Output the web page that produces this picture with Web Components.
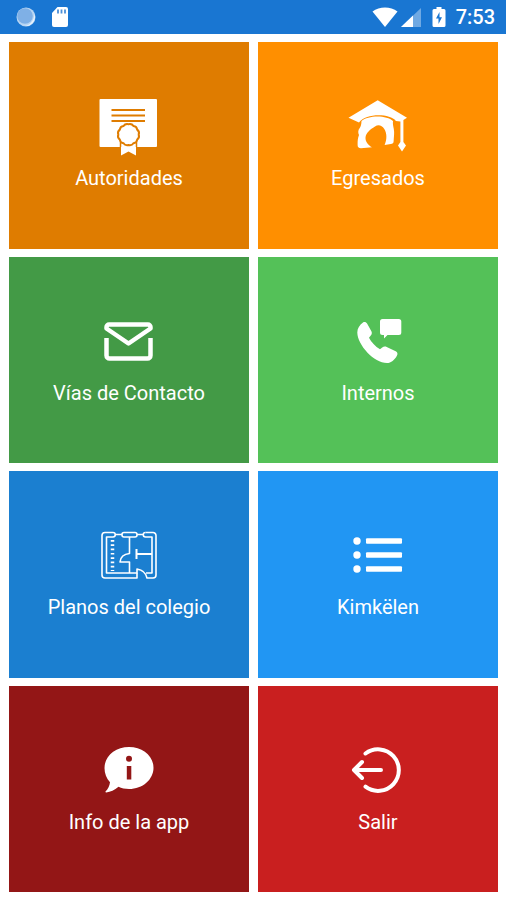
<!DOCTYPE html>
<html lang="es">
<head>
<meta charset="utf-8">
<meta name="viewport" content="width=device-width, initial-scale=1">
<title>Colegio</title>
<style>
    body {
        margin: 0;
        background: #fff;
        font-family: Roboto, "Liberation Sans", sans-serif;
    }
</style>
</head>
<body>

<app-screen>
    <status-bar slot="status" time="7:53"></status-bar>
    <menu-tile color="#df7c00" icon="diploma">Autoridades</menu-tile>
    <menu-tile color="#ff8f00" icon="graduate">Egresados</menu-tile>
    <menu-tile color="#439a46" icon="mail">Vías de Contacto</menu-tile>
    <menu-tile color="#54c158" icon="phone">Internos</menu-tile>
    <menu-tile color="#1b7fd0" icon="plan">Planos del colegio</menu-tile>
    <menu-tile color="#2196f3" icon="list">Kimkëlen</menu-tile>
    <menu-tile color="#931616" icon="info">Info de la app</menu-tile>
    <menu-tile color="#c91f1f" icon="exit">Salir</menu-tile>
</app-screen>

<script>
// All icons share a 64x64 box and take their colour from the tile
const icons = {
    diploma: `
        <rect x="2.500" y="3" width="57.500" height="48" rx="1" fill="currentColor"/>
        <path d="M14.500 14H48M14.500 19.500H48M14.500 25H48" stroke="var(--tile)" stroke-width="2"/>
        <path d="M24 46h15v13.500l-7.500-4-7.500 4z" fill="currentColor"/>
        <path d="M23.500 46v5M39.500 46v5" stroke="var(--tile)" stroke-width="1.500"/>
        <path d="M31.500 28.200q3.300-.8 5 1.800q3.200.4 3.700 3.600q2.600 2 1.500 5q1.100 3-1.500 5q-.5 3.200-3.700 3.600q-1.700 2.600-5 1.800q-3.300.8-5-1.800q-3.200-.4-3.700-3.600q-2.600-2-1.500-5q-1.100-3 1.500-5q.5-3.200 3.700-3.600q1.700-2.600 5-1.800z" fill="currentColor" stroke="var(--tile)" stroke-width="2"/>`,
    graduate: `
        <path d="M31.700 4.200L61 21.700l-3.600 2.200v22l2.600 3.600-4 6-4-6 2.400-3.600V25.500l-4.500-.5C44 17.500 20 17 13 26.500L2.500 21.700z" fill="currentColor"/>
        <path d="M15.500 25C22 19 41 19 47 25c-.4 3 .3 5 .8 8 .8 4 0 8-.2 12.500 0 1.500-1 2.500-2.800 2.500l-6.200 1c2.300-5 2.600-11.500-.3-16-2.500-3.800-6-4.700-9.300-2.500C24 33.500 20 37 19.500 41.500c-.2 4 2.500 7.500 6.500 9.800L15 52.300c-2.400 0-3.600-1.300-3.400-3.800 0-4 .2-6.500 1.400-9.500-1.200-2.500-.8-5 .4-6.500 1.500-2 2-4.500 2.100-7.500z" fill="currentColor"/>`,
    mail: `
        <path d="M9.500 17.500V16a2.500 2.500 0 0 1 2.500-2.500h39A2.500 2.500 0 0 1 53.500 16v1.500l-22 15z" fill="none" stroke="currentColor" stroke-width="4.500" stroke-linejoin="round"/>
        <path d="M9.500 27v17.500a3 3 0 0 0 3 3h38a3 3 0 0 0 3-3V27" fill="none" stroke="currentColor" stroke-width="4.500"/>`,
    phone: `
        <g transform="translate(0 -4)" fill="currentColor">
            <path d="M17 15.500c1.500-.8 3.200-.4 4.200 1.200l4.200 7.500c.8 1.500.5 3.200-.8 4.500L23 30.700c2.200 4.300 6.300 8.800 11 11.500l2.200-1.700c1.300-1 3-1.200 4.500-.5l9 4.200c1.700.8 2.300 2.600 1.300 4.200-2.300 4.600-6 7.400-10 7.600C28 56 11.500 38 11.300 25.500c0-4 2.200-7.500 5.700-10z"/>
            <path d="M36.500 12h16.300a2.500 2.500 0 0 1 2.500 2.500v11a2.500 2.500 0 0 1-2.500 2.500H41.500L38 31.500V28h-1.500a2.500 2.500 0 0 1-2.500-2.500v-11a2.500 2.500 0 0 1 2.500-2.500z"/>
        </g>`,
    plan: `
        <g transform="translate(0 -4)" fill="none" stroke="currentColor" stroke-width="1.600" stroke-linejoin="round">
            <path d="M16 11.500H8a3 3 0 0 0-3 3V54a3 3 0 0 0 3 3h32v-5"/>
            <path d="M48.500 11.500H56a3 3 0 0 1 3 3V54a3 3 0 0 1-3 3h-6c-1-5-4.500-8-10-9v4H9.500V16H16a2.200 2.200 0 0 0 0-4.500"/>
            <rect x="25" y="11.500" width="15" height="4.500" rx="2"/>
            <path d="M18 13.500h7M40 13.500h7M48.500 11.500a2.200 2.200 0 0 0 0 4.500H55v36h-6"/>
            <path d="M32.500 16v16.500c-5.500.5-9 4-9.500 8.500h9.500v11"/>
            <path d="M39.500 28v10M39.500 33H55" stroke-width="2"/>
            <path d="M15.500 19v31" stroke-width="3.500" stroke-dasharray="1.700 2.600"/>
        </g>`,
    list: `
        <g fill="currentColor">
            <circle cx="11" cy="16" r="3.700"/><circle cx="11" cy="30" r="3.700"/><circle cx="11" cy="44" r="3.700"/>
            <rect x="20" y="13.200" width="36" height="5.600" rx="1"/>
            <rect x="20" y="27.200" width="36" height="5.600" rx="1"/>
            <rect x="20" y="41.200" width="36" height="5.600" rx="1"/>
        </g>`,
    info: `
        <g transform="translate(0 -4)">
            <path d="M32 11c13.700 0 24.500 9 24.500 20.700S45.700 53 32 53c-4 0-7.500-.8-10.500-2.200-4 3.500-8 5.200-12.300 5.700-.8 0-1-.8-.5-1.300 2.200-2.300 4-5.400 4.300-9C9.500 42.500 7.500 37.500 7.500 32 7.500 20 18.300 11 32 11z" fill="currentColor"/>
            <circle cx="32" cy="22.800" r="3" fill="var(--tile)"/>
            <rect x="29.800" y="30" width="4.500" height="13.500" fill="var(--tile)"/>
        </g>`,
    exit: `
        <g fill="none" stroke="currentColor" stroke-width="4" stroke-linecap="round" stroke-linejoin="round">
            <path d="M19.500 13.500a20.800 20.800 0 1 1 0 33.200"/>
            <path d="M35 30H9M16 22l-8 8 8 8"/>
        </g>`
};

const screenTemplate = document.createElement('template');
screenTemplate.innerHTML = `
<style>
    :host {
        display: flex;
        flex-direction: column;
        min-height: 100vh;
    }

    main {
        flex: 1;
        display: grid;
        grid-template-columns: 1fr 1fr;
        grid-auto-rows: 1fr;
        gap: 8px 9px;
        padding: 8px 8px 8px 9px;
    }
</style>

<slot name="status"></slot>
<main><slot></slot></main>
`;

class AppScreen extends HTMLElement {
    constructor() {
        super();
        this.root = this.attachShadow({ mode: 'open' });
        this.root.appendChild(screenTemplate.content.cloneNode(true));
    }
}

const statusTemplate = document.createElement('template');
statusTemplate.innerHTML = `
<style>
    :host {
        display: block;
        background: #1976d2;
        color: #fff;
    }

    header {
        display: flex;
        align-items: center;
        justify-content: space-between;
        height: 34px;
        padding: 0 11px 0 15px;
    }

    .group {
        display: flex;
        align-items: center;
    }

    .left {
        gap: 14px;
    }

    .wifi {
        margin-right: 3px;
    }

    .signal {
        margin-right: 11px;
    }

    .battery {
        margin-right: 10px;
    }

    svg {
        display: block;
    }

    time {
        font-size: 20px;
        font-weight: 500;
        line-height: 24px;
    }
</style>

<header>
    <div class="group left">
        <svg width="22" height="22" viewBox="0 0 22 22" aria-hidden="true">
            <circle cx="11" cy="11" r="9.500" fill="#b9d6f3"/>
            <circle cx="10" cy="10" r="7.800" fill="#7fb0e6"/>
            <path d="M19.500 8a9.200 9.200 0 0 1-10 12c5-.3 9.500-5 10-12z" fill="#e8f3fd"/>
        </svg>
        <svg width="18" height="22" viewBox="0 0 18 22" aria-hidden="true">
            <path d="M6.500 1h8.500a2 2 0 0 1 2 2v16a2 2 0 0 1-2 2H3a2 2 0 0 1-2-2V7z" fill="#fff"/>
            <path d="M7 3.500v4M10.500 3.500v4M14 3.500v4" stroke="#4c8fd8" stroke-width="1.800"/>
        </svg>
    </div>
    <div class="group">
        <svg class="wifi" width="26" height="22" viewBox="0 0 26 22" aria-hidden="true">
            <path d="M.5 5.500C7.500.2 18.500.2 25.500 5.500L13 21z" fill="#fff"/>
        </svg>
        <svg class="signal" width="20" height="20" viewBox="0 0 20 20" aria-hidden="true">
            <path d="M0 20L20 1v19z" fill="#6fa9e3"/>
            <path d="M0 20L12 8.500V20z" fill="#fff"/>
        </svg>
        <svg class="battery" width="14" height="22" viewBox="0 0 14 22" aria-hidden="true">
            <path d="M4.500 1h5v2H12a1.500 1.500 0 0 1 1.500 1.500v15A1.500 1.500 0 0 1 12 21H2a1.500 1.500 0 0 1-1.500-1.500v-15A1.500 1.500 0 0 1 2 3h2.500z" fill="#fff"/>
            <path d="M7.500 6L4 12.500h2.500V18L10 11.200H7.500z" fill="#1976d2"/>
        </svg>
        <time></time>
    </div>
</header>
`;

class StatusBar extends HTMLElement {
    constructor() {
        super();
        this.root = this.attachShadow({ mode: 'open' });
        this.root.appendChild(statusTemplate.content.cloneNode(true));

        this.$time = this.root.querySelector('time');
    }

    static get observedAttributes() {
        return ['time'];
    }

    attributeChangedCallback(name, oldValue, newValue) {
        this.$time.textContent = newValue;
    }
}

const tileTemplate = document.createElement('template');
tileTemplate.innerHTML = `
<style>
    :host {
        display: grid;
    }

    button {
        display: flex;
        flex-direction: column;
        align-items: center;
        justify-content: center;
        gap: 6px;
        margin: 0;
        padding: 0 0 4px;
        border: 0;
        background: var(--tile);
        color: #fff;
        font-family: inherit;
        font-size: 20px;
        line-height: 24px;
        cursor: pointer;
    }

    svg {
        display: block;
    }
</style>

<button type="button">
    <svg width="64" height="64" viewBox="0 0 64 64" aria-hidden="true"></svg>
    <span><slot></slot></span>
</button>
`;

class MenuTile extends HTMLElement {
    constructor() {
        super();
        this.root = this.attachShadow({ mode: 'open' });
        this.root.appendChild(tileTemplate.content.cloneNode(true));

        this.$button = this.root.querySelector('button');
        this.$icon = this.root.querySelector('svg');

        // Eventlistener
        this.$button.addEventListener('click', () => {
            this.dispatchEvent(new CustomEvent('onSelect', { detail: this.getAttribute('icon') }));
        });
    }

    static get observedAttributes() {
        return ['color', 'icon'];
    }

    attributeChangedCallback(name, oldValue, newValue) {
        switch (name) {
            case 'color':
                this.$button.style.setProperty('--tile', newValue);
                break;
            case 'icon':
                this.$icon.innerHTML = icons[newValue] || '';
                break;
        }
    }
}

customElements.define('app-screen', AppScreen);
customElements.define('status-bar', StatusBar);
customElements.define('menu-tile', MenuTile);
</script>
</body>
</html>
